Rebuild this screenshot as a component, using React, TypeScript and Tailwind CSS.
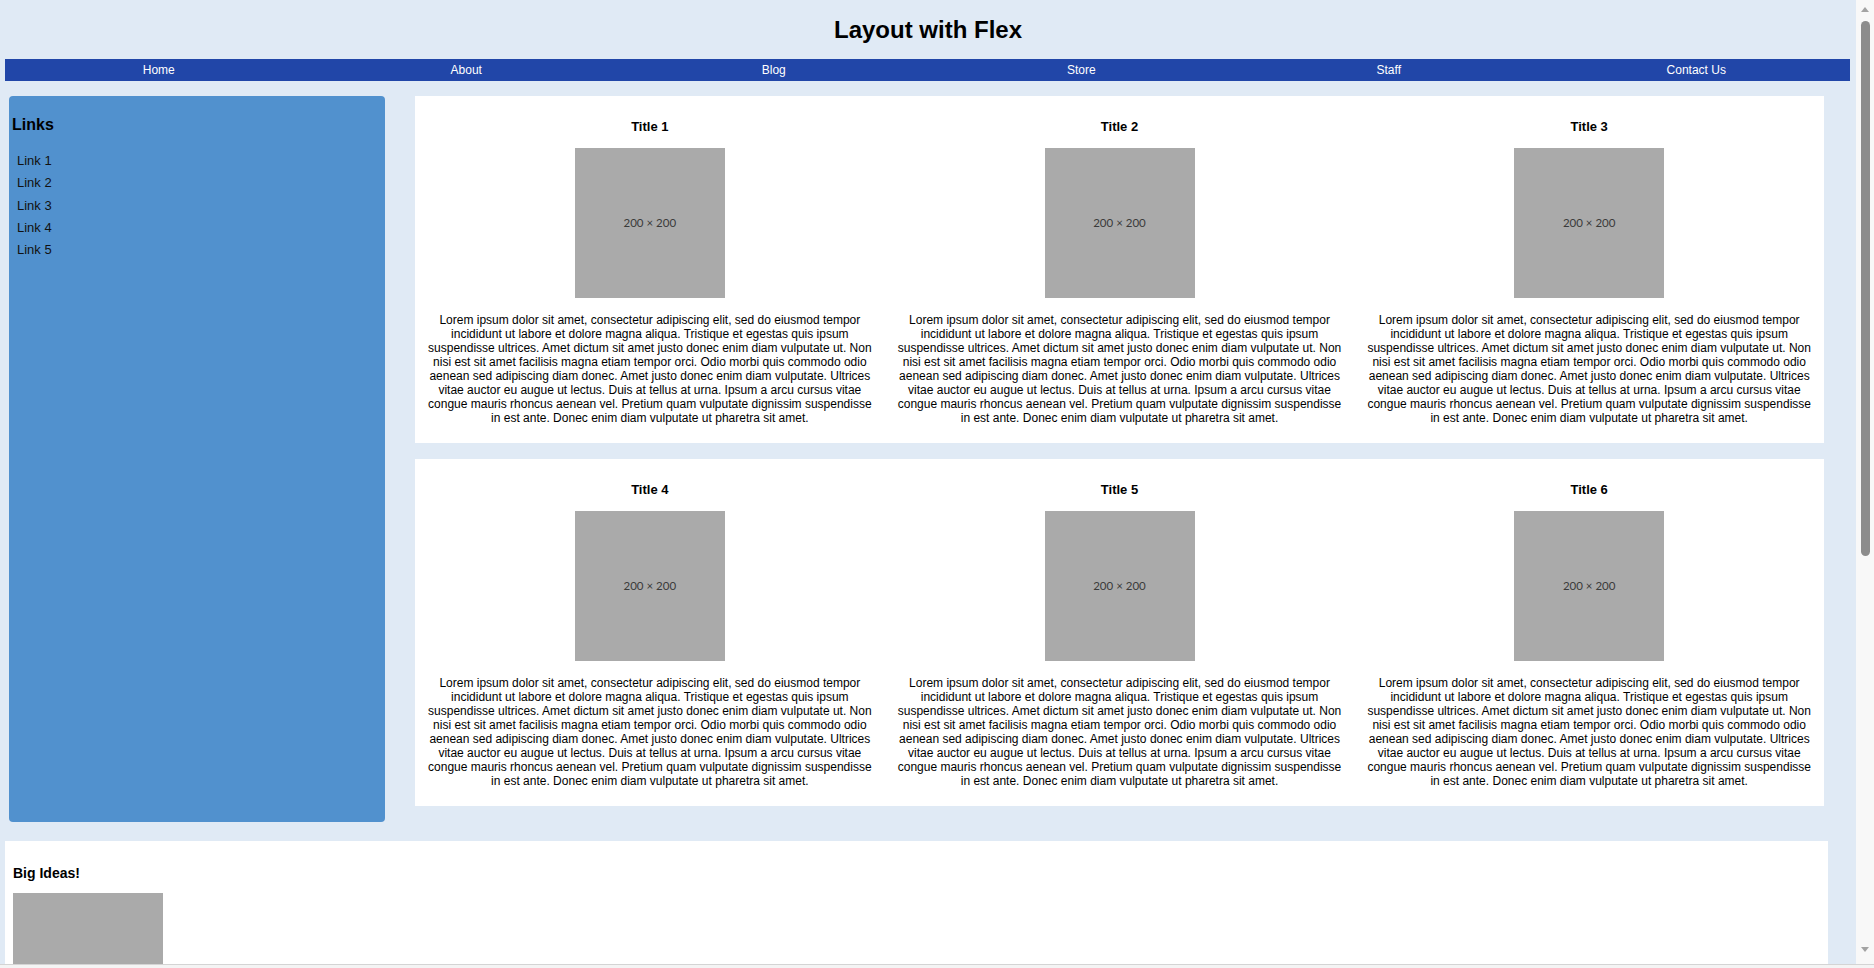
const lorem =
  'Lorem ipsum dolor sit amet, consectetur adipiscing elit, sed do eiusmod tempor incididunt ut labore et dolore magna aliqua. Tristique et egestas quis ipsum suspendisse ultrices. Amet dictum sit amet justo donec enim diam vulputate ut. Non nisi est sit amet facilisis magna etiam tempor orci. Odio morbi quis commodo odio aenean sed adipiscing diam donec. Amet justo donec enim diam vulputate. Ultrices vitae auctor eu augue ut lectus. Duis at tellus at urna. Ipsum a arcu cursus vitae congue mauris rhoncus aenean vel. Pretium quam vulputate dignissim suspendisse in est ante. Donec enim diam vulputate ut pharetra sit amet.';

const navItems = ['Home', 'About', 'Blog', 'Store', 'Staff', 'Contact Us'];
const links = ['Link 1', 'Link 2', 'Link 3', 'Link 4', 'Link 5'];
const rows = [
  ['Title 1', 'Title 2', 'Title 3'],
  ['Title 4', 'Title 5', 'Title 6'],
];

function Placeholder() {
  return (
    <div className="flex h-[150px] w-[150px] shrink-0 items-center justify-center bg-[#aaaaaa] font-['Lato',sans-serif] text-[11.5px] text-[#3a3a3a]">
      200 × 200
    </div>
  );
}

function Item({ title }: { title: string }) {
  return (
    <div className="flex flex-1 flex-col items-center px-[10px]">
      <h3 className="text-[13px] font-bold leading-[16px]">{title}</h3>
      <div className="mt-[13px]">
        <Placeholder />
      </div>
      <p className="mt-[15px] text-center text-[12px] leading-[14px]">{lorem}</p>
    </div>
  );
}

function Scrollbar() {
  return (
    <div className="flex w-[18px] shrink-0 flex-col items-center bg-[#f8f8f8]">
      <div className="mt-[7px] h-0 w-0 border-x-[4px] border-b-[5px] border-x-transparent border-b-[#a3a3a3]" />
      <div className="ml-[1px] mt-[9px] h-[535px] w-[9px] rounded-full bg-[#8c8c8c]" />
      <div className="flex-1" />
      <div className="mb-[12px] h-0 w-0 border-x-[4px] border-t-[5px] border-x-transparent border-t-[#a3a3a3]" />
    </div>
  );
}

export default function App() {
  return (
    <div className="flex h-[968px] w-[1874px] flex-col overflow-hidden bg-[#f1f1f1] font-['Liberation_Sans',Arial,sans-serif] text-black">
      <div className="flex h-[964px] w-full">
        <div className="flex w-[1856px] shrink-0 flex-col overflow-hidden bg-[#e0eaf5]">
          <header className="flex h-[59px] shrink-0 items-center justify-center">
            <h1 className="text-[24px] font-bold leading-[28px]">Layout with Flex</h1>
          </header>

          <nav className="mx-[5px] flex h-[22px] w-[1845px] shrink-0 bg-[#2146a8]">
            {navItems.map((item) => (
              <a key={item} className="flex-1 text-center text-[12px] leading-[22px] text-white">
                {item}
              </a>
            ))}
          </nav>

          <div className="mt-[15px] flex shrink-0 items-start">
            <aside className="ml-[9px] h-[726px] w-[376px] shrink-0 rounded-[4px] bg-[#5191ce] pt-[20px]">
              <h2 className="pl-[3px] text-[16px] font-bold leading-[18px]">Links</h2>
              <ul className="mt-[16px] pl-[8px]">
                {links.map((link) => (
                  <li key={link} className="text-[13px] leading-[22.3px] text-[#111]">
                    {link}
                  </li>
                ))}
              </ul>
            </aside>

            <main className="ml-[30px] flex w-[1409px] shrink-0 flex-col gap-[16px]">
              {rows.map((row, index) => (
                <section key={index} className="flex bg-white pb-[18px] pt-[23px]">
                  {row.map((title) => (
                    <Item key={title} title={title} />
                  ))}
                </section>
              ))}
            </main>
          </div>

          <section className="ml-[5px] mt-[19px] w-[1823px] shrink-0 bg-white pl-[8px] pt-[24px]">
            <h2 className="text-[14px] font-bold leading-[16px]">Big Ideas!</h2>
            <div className="mt-[12px]">
              <Placeholder />
            </div>
          </section>
        </div>
        <Scrollbar />
      </div>
      <div className="h-[4px] w-full border-t border-[#d4d4d4] bg-[#f4f4f4]" />
    </div>
  );
}
